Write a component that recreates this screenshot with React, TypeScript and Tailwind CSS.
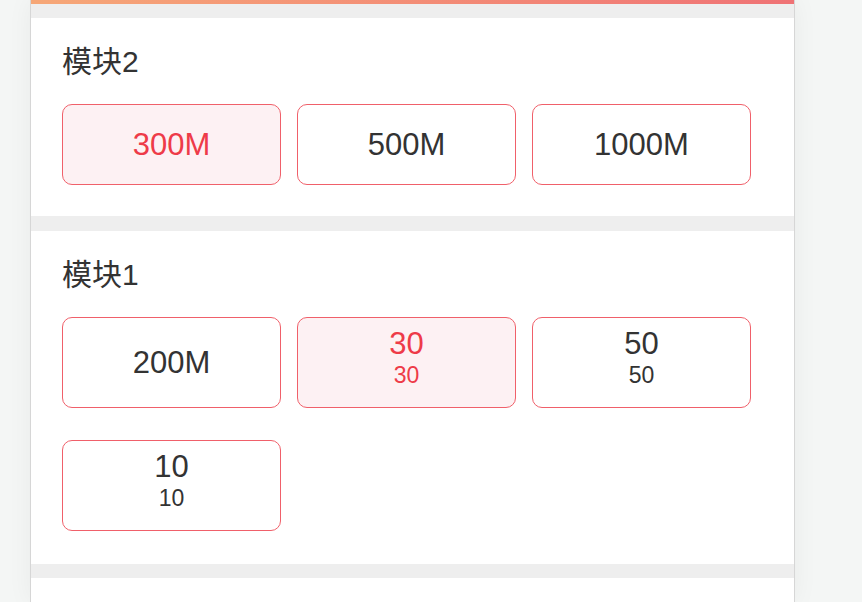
import React, { useState } from 'react';

type Option = { id: string; label: string; sub?: string };

const modules: { title: string; options: Option[]; selected: string; tall?: boolean }[] = [
  {
    title: '模块2',
    selected: '300M',
    options: [
      { id: '300M', label: '300M' },
      { id: '500M', label: '500M' },
      { id: '1000M', label: '1000M' },
    ],
  },
  {
    title: '模块1',
    selected: '30',
    tall: true,
    options: [
      { id: '200M', label: '200M' },
      { id: '30', label: '30', sub: '30' },
      { id: '50', label: '50', sub: '50' },
      { id: '10', label: '10', sub: '10' },
    ],
  },
];

function OptionButton({ opt, active, tall, onClick }: { opt: Option; active: boolean; tall?: boolean; onClick: () => void }) {
  return (
    <button
      onClick={onClick}
      className={`flex flex-col items-center justify-center rounded-[10px] border border-[#f0606a] ${tall ? 'h-[91px]' : 'h-[81px]'} ${
        active ? 'bg-[#fdf1f3] text-[#ee3b48]' : 'bg-white text-[#333333]'
      }`}
    >
      {opt.sub ? (
        <div className="flex flex-col items-center pb-[8px]">
          <span className="text-[31px] leading-[32px]">{opt.label}</span>
          <span className="text-[23px] leading-[30px]">{opt.sub}</span>
        </div>
      ) : (
        <span className="text-[31px] leading-[32px]">{opt.label}</span>
      )}
    </button>
  );
}

function ModuleSection({ title, options, selected, tall }: { title: string; options: Option[]; selected: string; tall?: boolean }) {
  const [current, setCurrent] = useState(selected);
  return (
    <section className={`bg-white pl-[31px] pt-[30px] ${tall ? 'pb-[33px]' : 'pb-[31px]'}`}>
      <h2 className="text-[30px] leading-[28px] text-[#333333]">{title}</h2>
      <div className="mt-[28px] grid grid-cols-[repeat(3,219px)] gap-x-[16px] gap-y-[32px]">
        {options.map((opt) => (
          <OptionButton key={opt.id} opt={opt} tall={tall} active={current === opt.id} onClick={() => setCurrent(opt.id)} />
        ))}
      </div>
    </section>
  );
}

export default function App() {
  return (
    <div
      className="h-[602px] overflow-hidden bg-[#f4f6f5] pl-[30px]"
      style={{ fontFamily: '"Liberation Sans", "Noto Sans CJK SC", sans-serif' }}
    >
      <div className="w-[765px] h-full border-x border-[#d6d6d6] bg-[#eeeeee] shadow-[0_0_24px_rgba(0,0,0,0.05)]">
        <div className="h-[4px] bg-gradient-to-r from-[#f6a777] to-[#ef7275]" />
        <div className="h-[14px]" />
        <ModuleSection {...modules[0]} />
        <div className="h-[15px]" />
        <ModuleSection {...modules[1]} />
        <div className="h-[14px]" />
        <div className="h-[40px] bg-white" />
      </div>
    </div>
  );
}
